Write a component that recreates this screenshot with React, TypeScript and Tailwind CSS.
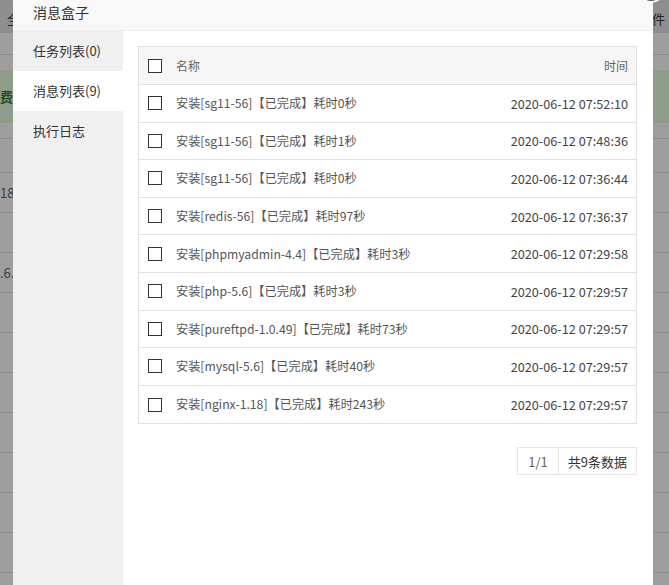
import React from 'react';

const messages = [
  { name: '安装[sg11-56]【已完成】耗时0秒', time: '2020-06-12 07:52:10' },
  { name: '安装[sg11-56]【已完成】耗时1秒', time: '2020-06-12 07:48:36' },
  { name: '安装[sg11-56]【已完成】耗时0秒', time: '2020-06-12 07:36:44' },
  { name: '安装[redis-56]【已完成】耗时97秒', time: '2020-06-12 07:36:37' },
  { name: '安装[phpmyadmin-4.4]【已完成】耗时3秒', time: '2020-06-12 07:29:58' },
  { name: '安装[php-5.6]【已完成】耗时3秒', time: '2020-06-12 07:29:57' },
  { name: '安装[pureftpd-1.0.49]【已完成】耗时73秒', time: '2020-06-12 07:29:57' },
  { name: '安装[mysql-5.6]【已完成】耗时40秒', time: '2020-06-12 07:29:57' },
  { name: '安装[nginx-1.18]【已完成】耗时243秒', time: '2020-06-12 07:29:57' },
];

const tabs = ['任务列表(0)', '消息列表(9)', '执行日志'];

function Checkbox() {
  return <span className="w-[14px] h-[14px] border border-[#333] bg-white shrink-0" />;
}

// dimmed page behind the dialog
function BackgroundPage() {
  const rows = Array.from({ length: 10 });
  return (
    <div className="w-full h-[585px] bg-[#9e9e9e] flex flex-col overflow-hidden">
      <div className="h-[33px] shrink-0 bg-[#8e8e8e] flex items-center justify-between pt-[4px] text-[13px] text-[#222]">
        <span className="ml-[7px]">全</span>
        <span className="mr-[4px]">件</span>
      </div>
      <div className="h-[22px] shrink-0 border-b border-[#8a8a8a]" />
      <div className="h-[15px] shrink-0" />
      <div className="h-[53px] shrink-0 bg-[#8f9c89] flex items-center text-[13px] text-[#1f4a1f] font-bold">
        <span>费使</span>
      </div>
      <div className="h-[16px] shrink-0 border-b border-[#8a8a8a]" />
      <div className="h-[34px] shrink-0 border-b border-[#8a8a8a]" />
      {rows.map((_, i) => (
        <div key={i} className="h-[40px] shrink-0 border-b border-[#8a8a8a] flex items-center text-[13px] text-[#34404c]">
          {i === 0 && <span>18.0</span>}
          {i === 2 && <span>.6.2</span>}
        </div>
      ))}
    </div>
  );
}

export default function App() {
  return (
    <div className="relative w-[669px] h-[585px] overflow-hidden font-['Noto_Sans_CJK_SC','Microsoft_YaHei',sans-serif]">
      <BackgroundPage />

      {/* dialog */}
      <div className="absolute left-[13px] top-0 w-[640px] h-[585px] bg-white flex flex-col">
        <div className="h-[31px] shrink-0 bg-[#f8f8f8] border-b border-[#eeeeee] px-[20px] pt-[2px] text-[14px] leading-[20px] text-[#333]">
          消息盒子
        </div>
        <div className="flex flex-1 min-h-0">
          <div className="w-[110px] shrink-0 bg-[#f0f0f0] flex flex-col">
            {tabs.map((t, i) => (
              <div
                key={t}
                className={`h-[40px] flex items-center px-[20px] text-[13px] text-[#333] ${i === 1 ? 'bg-white' : ''}`}
              >
                {t}
              </div>
            ))}
          </div>
          <div className="flex-1 px-[15px] pt-[15px] pr-[16px] flex flex-col">
            <div className="border border-[#e2e2e2] text-[12px]">
              <div className="h-[38px] flex items-center pl-[9px] pr-[8px] bg-[#f6f6f6] border-b border-[#e2e2e2] text-[#666]">
                <Checkbox />
                <span className="ml-[14px] flex-1">名称</span>
                <span>时间</span>
              </div>
              {messages.map((m, i) => (
                <div
                  key={i}
                  className={`h-[37.6px] flex items-center pl-[9px] pr-[8px] text-[#555] ${i < messages.length - 1 ? 'border-b border-[#e2e2e2]' : ''}`}
                >
                  <Checkbox />
                  <span className="ml-[14px] flex-1 text-[12.2px]">{m.name}</span>
                  <span className="text-[12.7px] text-[#444]">{m.time}</span>
                </div>
              ))}
            </div>
            <div className="mt-[23px] flex justify-end">
              <div className="flex h-[28px] text-[13px] border border-[#e6e6e6]">
                <span className="px-[10px] flex items-center text-[#666] border-r border-[#e6e6e6]">1/1</span>
                <span className="px-[9px] flex items-center text-[#333]">共9条数据</span>
              </div>
            </div>
          </div>
        </div>
      </div>

      {/* close button, mostly above the window */}
      <div className="absolute left-[637px] top-[-25px] w-[28px] h-[28px] rounded-full bg-[#5a5a5a] border-2 border-white" />
    </div>
  );
}
